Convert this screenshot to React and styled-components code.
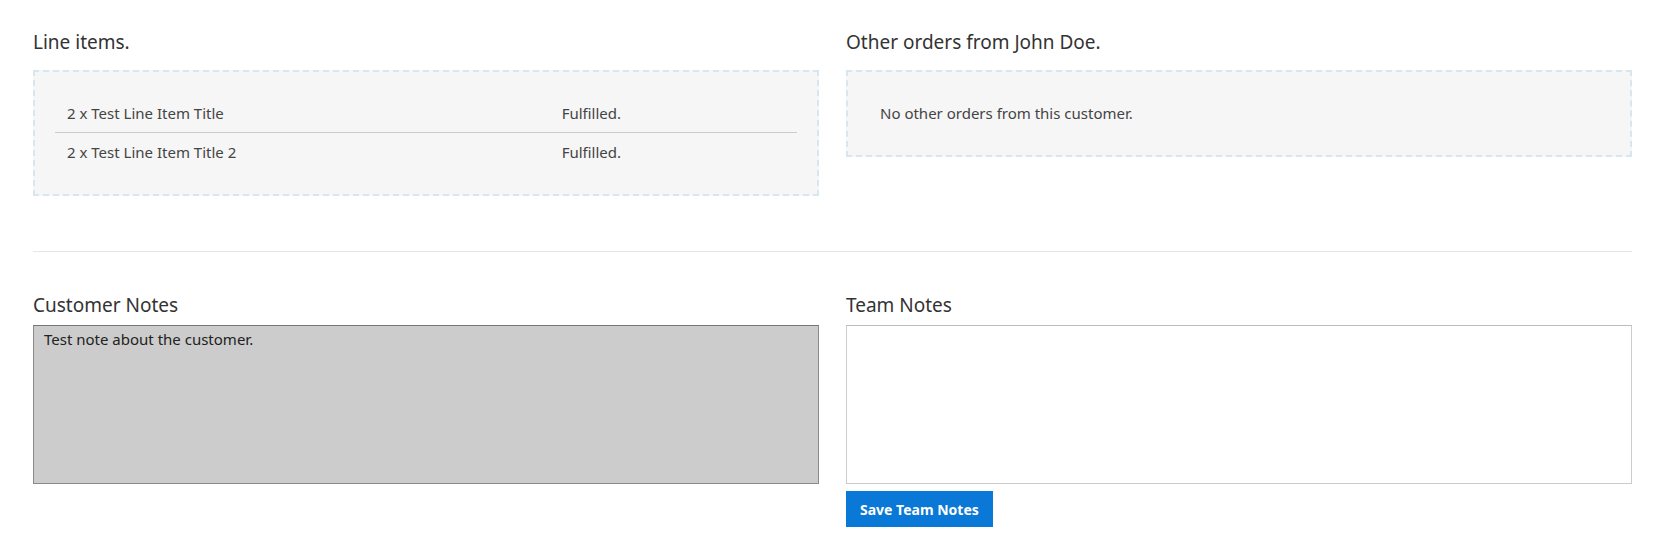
import React from "react";
import styled, { createGlobalStyle } from "styled-components";

const GlobalStyle = createGlobalStyle`
  body {
    margin: 0;
    background: #ffffff;
    font-family: "Noto Sans", "Open Sans", sans-serif;
    color: #333;
  }
`;

const Page = styled.div`
  padding: 31px 28px 0 33px;
`;

const Columns = styled.div`
  display: grid;
  grid-template-columns: 1fr 1fr;
  column-gap: 27px;
  align-items: start;
`;

const Section = styled.section`
  display: flex;
  flex-direction: column;
`;

const Title = styled.h3`
  margin: 0 0 ${(p) => p.$gap || 17}px;
  font-size: 19px;
  line-height: 22px;
  font-weight: 400;
  color: #333;
`;

const Panel = styled.div`
  border: 2px dashed #d8e6f0;
  background: #f6f6f6;
  padding: 22px 20px 23px;
`;

const Row = styled.div`
  display: grid;
  grid-template-columns: 2fr 1fr;
  align-items: center;
  height: 38px;
  font-size: 15px;
  color: #444;
  & + & {
    border-top: 1px solid #cccccc;
  }
`;

const Cell = styled.span`
  padding-left: 12px;
`;

const Divider = styled.hr`
  border: 0;
  border-top: 1px solid #e5e5e5;
  margin: 55px 0 42px;
`;

const Notes = styled.textarea`
  box-sizing: border-box;
  width: 100%;
  height: 159px;
  margin: 0;
  padding: 3px 10px;
  resize: none;
  font-family: inherit;
  font-size: 15px;
  line-height: 20px;
  color: #222;
  background: ${(p) => (p.readOnly ? "#cccccc" : "#ffffff")};
  border: 1px solid ${(p) => (p.readOnly ? "#8a8a8a" : "#cccccc")};
  border-top-color: ${(p) => (p.readOnly ? "#777" : "#bbb")};
  outline: none;
`;

const SaveButton = styled.button`
  align-self: flex-start;
  margin-top: 7px;
  height: 36px;
  padding: 0 14px;
  border: 0;
  background: #0a78d6;
  color: #fff;
  font-family: inherit;
  font-size: 14px;
  font-weight: 700;
  cursor: pointer;
`;

const lineItems = [
  { title: "2 x Test Line Item Title", status: "Fulfilled." },
  { title: "2 x Test Line Item Title 2", status: "Fulfilled." },
];

export default function App() {
  return (
    <Page>
      <GlobalStyle />
      <Columns>
        <Section>
          <Title>Line items.</Title>
          <Panel>
            {lineItems.map((item) => (
              <Row key={item.title}>
                <Cell>{item.title}</Cell>
                <Cell>{item.status}</Cell>
              </Row>
            ))}
          </Panel>
        </Section>
        <Section>
          <Title>Other orders from John Doe.</Title>
          <Panel>
            <Row>
              <Cell>No other orders from this customer.</Cell>
            </Row>
          </Panel>
        </Section>
      </Columns>
      <Divider />
      <Columns>
        <Section>
          <Title $gap={9}>Customer Notes</Title>
          <Notes readOnly defaultValue="Test note about the customer." />
        </Section>
        <Section>
          <Title $gap={9}>Team Notes</Title>
          <Notes defaultValue="" />
          <SaveButton>Save Team Notes</SaveButton>
        </Section>
      </Columns>
    </Page>
  );
}
